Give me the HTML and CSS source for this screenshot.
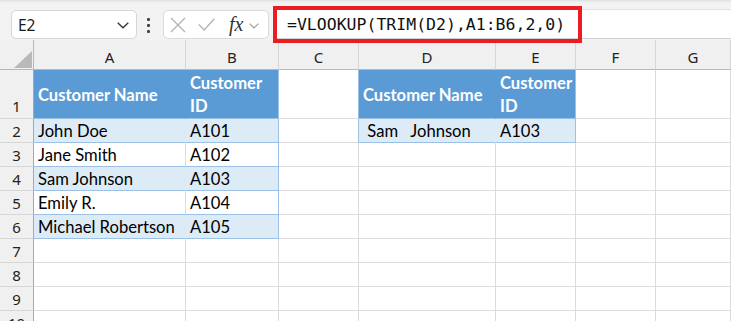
FILE: index.html
```html
<!DOCTYPE html>
<html lang="en">
<head>
    <meta charset="UTF-8">
    <meta name="viewport" content="width=device-width, initial-scale=1.0">
    <title>VLOOKUP with TRIM</title>
    <link rel="stylesheet" href="styles.css">
</head>
<body>
    <!-- Formula bar -->
    <div class="formula-bar">
        <div class="name-box">
            <span>E2</span>
            <svg class="chev" width="12" height="7" viewBox="0 0 12 7"><path d="M0.7 0.7 L6 5.8 L11.3 0.7" fill="none" stroke="#333" stroke-width="1.3"/></svg>
        </div>
        <div class="grip"><i></i><i></i><i></i></div>
        <div class="fx-box">
            <svg class="ic-x" width="16" height="16" viewBox="0 0 16 16"><path d="M1 1 L15 15 M15 1 L1 15" stroke="#b3b3b3" stroke-width="1.3" fill="none"/></svg>
            <svg class="ic-ok" width="17" height="13" viewBox="0 0 17 13"><path d="M0.8 6.5 L6.2 12 L16.3 0.8" stroke="#b3b3b3" stroke-width="1.3" fill="none"/></svg>
            <span class="fx">fx</span>
            <svg class="ic-dd" width="10" height="6" viewBox="0 0 10 6"><path d="M0.6 0.6 L5 5 L9.4 0.6" stroke="#9a9a9a" stroke-width="1.1" fill="none"/></svg>
        </div>
        <div class="formula-input">
            <span class="formula-text">=VLOOKUP(TRIM(D2),A1:B6,2,0)</span>
            <div class="highlight"></div>
        </div>
    </div>

    <!-- Sheet -->
    <div class="sheet">
        <div class="corner"><svg width="18" height="17" viewBox="0 0 18 17"><polygon points="0,17 18,17 18,0" fill="#b9b9b9"/></svg></div>
        <div class="col-head">A</div>
        <div class="col-head">B</div>
        <div class="col-head">C</div>
        <div class="col-head">D</div>
        <div class="col-head">E</div>
        <div class="col-head">F</div>
        <div class="col-head">G</div>

        <div class="row-head tall">1</div>
        <div class="cell th">Customer Name</div>
        <div class="cell th edge">Customer ID</div>
        <div class="cell edge"></div>
        <div class="cell th">Customer Name</div>
        <div class="cell th edge">Customer ID</div>
        <div class="cell"></div>
        <div class="cell"></div>

        <div class="row-head">2</div>
        <div class="cell band">John Doe</div>
        <div class="cell band edge">A101</div>
        <div class="cell edge"></div>
        <div class="cell band"> Sam   Johnson</div>
        <div class="cell band edge">A103</div>
        <div class="cell"></div>
        <div class="cell"></div>

        <div class="row-head">3</div>
        <div class="cell tbl">Jane Smith</div>
        <div class="cell tbl edge">A102</div>
        <div class="cell"></div>
        <div class="cell"></div>
        <div class="cell"></div>
        <div class="cell"></div>
        <div class="cell"></div>

        <div class="row-head">4</div>
        <div class="cell band">Sam Johnson</div>
        <div class="cell band edge">A103</div>
        <div class="cell"></div>
        <div class="cell"></div>
        <div class="cell"></div>
        <div class="cell"></div>
        <div class="cell"></div>

        <div class="row-head">5</div>
        <div class="cell tbl">Emily R.</div>
        <div class="cell tbl edge">A104</div>
        <div class="cell"></div>
        <div class="cell"></div>
        <div class="cell"></div>
        <div class="cell"></div>
        <div class="cell"></div>

        <div class="row-head">6</div>
        <div class="cell band">Michael Robertson</div>
        <div class="cell band edge">A105</div>
        <div class="cell"></div>
        <div class="cell"></div>
        <div class="cell"></div>
        <div class="cell"></div>
        <div class="cell"></div>

        <div class="row-head">7</div>
        <div class="cell"></div><div class="cell"></div><div class="cell"></div><div class="cell"></div><div class="cell"></div><div class="cell"></div><div class="cell"></div>

        <div class="row-head">8</div>
        <div class="cell"></div><div class="cell"></div><div class="cell"></div><div class="cell"></div><div class="cell"></div><div class="cell"></div><div class="cell"></div>

        <div class="row-head">9</div>
        <div class="cell"></div><div class="cell"></div><div class="cell"></div><div class="cell"></div><div class="cell"></div><div class="cell"></div><div class="cell"></div>

        <div class="row-head">10</div>
        <div class="cell"></div><div class="cell"></div><div class="cell"></div><div class="cell"></div><div class="cell"></div><div class="cell"></div><div class="cell"></div>
    </div>
</body>
</html>
```

FILE: styles.css
```css
body {
    margin: 0;
    width: 731px;
    height: 321px;
    overflow: hidden;
    background: #fff;
    font-family: "Noto Sans", "Open Sans", sans-serif;
}
.formula-bar {
    height: 40px;
    background: #f3f3f3;
    display: flex;
    align-items: flex-start;
    box-shadow: inset 0 3px 3px -2px rgba(0, 0, 0, 0.1);
}
.name-box {
    margin: 10px 0 0 11px;
    width: 126px;
    height: 29px;
    box-sizing: border-box;
    background: #fff;
    border: 1px solid #d6d6d6;
    border-radius: 5px;
    display: flex;
    align-items: center;
    justify-content: space-between;
    padding: 0 7px 0 6px;
    font-size: 15.5px;
    color: #1a1a1a;
}
.chev { margin-top: 2px; }
.grip {
    width: 26px;
    height: 40px;
    display: flex;
    flex-direction: column;
    padding: 18px 0 0 10px;
    box-sizing: border-box;
    gap: 3px;
}
.grip i {
    display: block;
    width: 3px;
    height: 3px;
    background: #444;
    border-radius: 1px;
}
.fx-box {
    margin-top: 10px;
    width: 106px;
    height: 29px;
    box-sizing: border-box;
    background: #fff;
    border: 1px solid #dadada;
    border-radius: 5px;
    display: flex;
    align-items: center;
}
.ic-x { margin-left: 6px; }
.ic-ok { margin-left: 12px; }
.fx {
    margin-left: 14px;
    font-family: "Liberation Serif", serif;
    font-style: italic;
    font-size: 20px;
    color: #333;
    line-height: 20px;
    margin-top: -2px;
}
.ic-dd { margin-left: 6px; margin-top: 2px; }
.formula-input {
    position: relative;
    margin: 9px 0 0 4px;
    flex: 1;
    height: 30px;
    box-sizing: border-box;
    background: #fff;
    border-top: 1px solid #e2e2e2;
    border-bottom: 1px solid #d0d0d0;
    display: flex;
    align-items: center;
    padding-left: 14px;
}
.formula-text {
    font-family: "DejaVu Sans Mono", "Liberation Mono", monospace;
    font-size: 16.5px;
    color: #111;
    white-space: pre;
}
/* red annotation box drawn over the formula */
.highlight {
    position: absolute;
    left: 0;
    top: -4px;
    width: 309px;
    height: 37px;
    box-sizing: border-box;
    border: 4px solid #ea1c24;
    z-index: 2;
}
.sheet {
    display: grid;
    grid-template-columns: 34px 152px 93px 80px 137px 80px 80px 1fr;
    grid-template-rows: 30px 49px repeat(9, 24px);
}
.corner {
    background: #f0f0f0;
    border-right: 1px solid #b8b8b8;
    border-bottom: 1px solid #b8b8b8;
    display: flex;
    justify-content: flex-end;
    align-items: flex-end;
    padding: 0 1px 1px 0;
}
.col-head {
    background: #f0f0f0;
    border-right: 1px solid #d6d6d6;
    border-bottom: 1px solid #b8b8b8;
    display: flex;
    justify-content: center;
    align-items: flex-end;
    line-height: 24px;
    font-size: 15px;
    color: #222;
}
.row-head {
    background: #f0f0f0;
    border-right: 1px solid #a9a9a9;
    border-bottom: 1px solid #d6d6d6;
    display: flex;
    justify-content: center;
    align-items: center;
    font-size: 15px;
    color: #222;
}
.row-head.tall { align-items: flex-end; line-height: 24px; }
.cell {
    border-right: 1px solid #dcdcdc;
    border-bottom: 1px solid #dcdcdc;
    padding: 2px 4px 0;
    display: flex;
    align-items: center;
    font-family: Lato, "Open Sans", sans-serif;
    font-size: 16.6px;
    line-height: 23px;
    color: #000;
    white-space: pre-wrap;
    overflow: hidden;
}
.th {
    background: #5b9bd5;
    color: #fff;
    font-weight: 700;
    border-right-color: #5b9bd5;
    border-bottom-color: #9bc2e6;
}
.band {
    background: #ddebf7;
    border-right-color: #ddebf7;
    border-bottom-color: #9bc2e6;
}
.tbl { border-bottom-color: #9bc2e6; }
.edge { border-right-color: #9bc2e6; }
```
